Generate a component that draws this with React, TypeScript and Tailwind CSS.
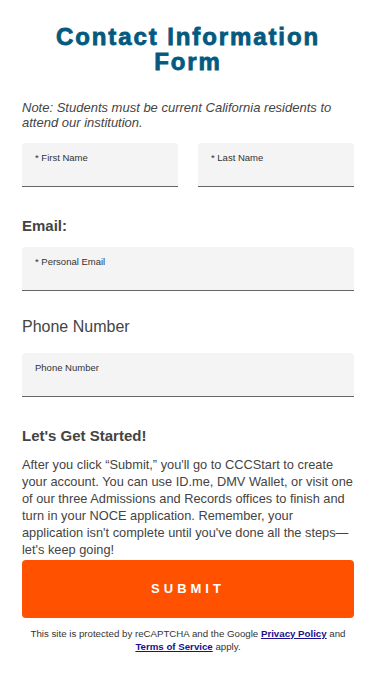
export default function App() {
  return (
    <div className="min-h-screen bg-white px-[22px] pt-[24px] pb-8 font-['Liberation_Sans',Arial,sans-serif] text-[#444]">
      {/* Title */}
      <h1 className="text-center text-[24px] leading-[25px] font-bold tracking-[1.9px] text-[#04597f] [-webkit-text-stroke:0.8px_#04597f]">
        Contact Information
        <br />
        Form
      </h1>

      <p className="mt-[26px] text-[13px] leading-[15px] italic text-[#444]">
        Note: Students must be current California residents to attend our institution.
      </p>

      {/* Name */}
      <div className="mt-[13px] grid grid-cols-2 gap-5">
        <Field label="* First Name" />
        <Field label="* Last Name" />
      </div>

      <h2 className="mt-[30px] text-[15px] leading-[18px] font-bold text-[#444]">Email:</h2>
      <div className="mt-[12px]">
        <Field label="* Personal Email" />
      </div>

      <h2 className="mt-[26px] text-[16px] leading-[20px] text-[#444]">Phone Number</h2>
      <div className="mt-[16px]">
        <Field label="Phone Number" />
      </div>

      <h3 className="mt-[30px] text-[15px] leading-[18px] font-bold text-[#444]">Let's Get Started!</h3>
      <p className="mt-[11px] text-[12.8px] leading-[17px] text-[#444]">
        After you click “Submit,” you'll go to CCCStart to create your account. You can use ID.me, DMV Wallet, or visit
        one of our three Admissions and Records offices to finish and turn in your NOCE application. Remember, your
        application isn't complete until you've done all the steps—let's keep going!
      </p>

      <button
        type="button"
        className="mt-[2px] flex h-[58px] w-full items-center justify-center rounded-[4px] bg-[#ff5100] text-[13px] font-bold tracking-[4px] text-white"
      >
        SUBMIT
      </button>

      <p className="mt-[9px] text-center text-[9.7px] leading-[13px] text-[#333]">
        This site is protected by reCAPTCHA and the Google{" "}
        <a href="#" className="font-bold text-[#1a0f8f] underline">
          Privacy Policy
        </a>{" "}
        and{" "}
        <a href="#" className="font-bold text-[#1a0f8f] underline">
          Terms of Service
        </a>{" "}
        apply.
      </p>
    </div>
  )
}

function Field({ label }: { label: string }) {
  return (
    <div className="h-[44px] rounded-t-[4px] border-b-[1.5px] border-[#666] bg-[#f4f4f4] px-[13px] pt-[9px]">
      <div className="text-[9.5px] leading-[12px] text-[#333]">{label}</div>
    </div>
  )
}
